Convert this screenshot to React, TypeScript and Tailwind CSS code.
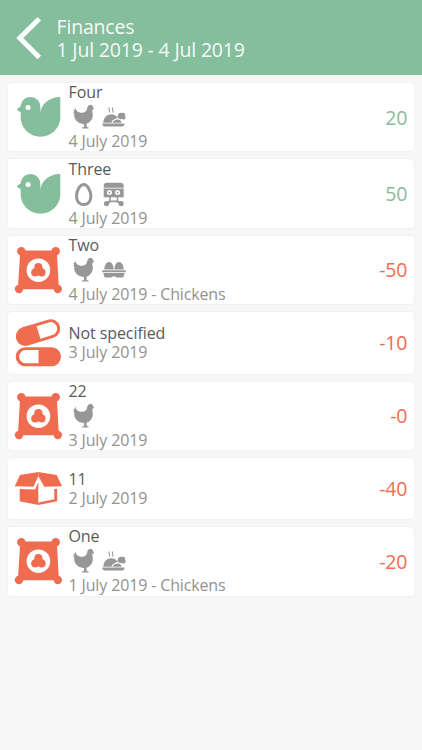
import type { ComponentType } from "react";

function BackIcon() {
  return (
    <svg width="30" height="46" viewBox="0 0 30 46" fill="none" stroke="#fff" strokeWidth="5">
      <path d="M25.3 3.8 5.8 23 25.3 42.4" />
    </svg>
  );
}

/* Category icons, 48px */

function BirdIcon() {
  return (
    <svg width="48" height="48" viewBox="0 0 48 48" fill="#85be9c">
      <path d="M2.6 16.6 6.7 13.2C7.1 8 11 3.9 16.4 3.9c5.7 0 10 4.4 10 10V20C27.2 11 35 4 46.3 3.9V24c0 11-8.8 19.7-19.8 19.7S6.7 35 6.7 24v-4.8Z" />
      <circle cx="14.1" cy="14.5" r="2.5" fill="#fff" />
    </svg>
  );
}

function FeedIcon() {
  return (
    <svg width="48" height="48" viewBox="0 0 48 48" fill="#ef6c51">
      <path d="M7.3 4.5H41.7L43.1 10 44.7 40 43.8 43.3H5L4.1 40 5.9 10Z" />
      <circle cx="7.3" cy="5.2" r="4.2" />
      <circle cx="41.7" cy="5.2" r="4.2" />
      <circle cx="5" cy="43" r="4.2" />
      <circle cx="43.8" cy="43" r="4.2" />
      <circle cx="24.4" cy="24.2" r="11.8" fill="#fff" />
      <circle cx="24.4" cy="21" r="4" />
      <circle cx="21.2" cy="26.4" r="4" />
      <circle cx="27.6" cy="26.4" r="4" />
      <path d="M20.5 21.5h7.8l2.5 4H18Z" />
    </svg>
  );
}

function PillsIcon() {
  return (
    <svg width="48" height="48" viewBox="0 0 48 48" fill="#ef6c51">
      <g transform="rotate(-17 24 13.6)">
        <rect x="1.3" y="4.1" width="45.4" height="19" rx="9.5" />
        <path d="M24.5 7h12.7a6.6 6.6 0 0 1 0 13.2H24.5Z" fill="#fff" />
      </g>
      <rect x="1.7" y="28.2" width="45.3" height="19" rx="9.5" />
      <path d="M24.5 31.1H11.7a6.6 6.6 0 0 0 0 13.2h12.8Z" fill="#fff" />
    </svg>
  );
}

function BoxIcon() {
  return (
    <svg width="48" height="48" viewBox="0 0 48 48" fill="#ef6c51">
      <path d="M6 10.1 24.4 7.1V11L19.5 21.7.7 21.2Z" />
      <path d="M42.7 10.1 24.3 7.1V11L30.3 21.7 48 21.2Z" />
      <path d="M5.7 24.1 21 24.5 24.3 17V40.1L5.7 36.2Z" />
      <path d="M40.3 24.1H43.2V36.2L24.3 40.1V37.5L40.3 34.3Z" />
    </svg>
  );
}

/* Tag icons, 30px */

function ChickenIcon() {
  return (
    <svg width="30" height="30" viewBox="0 0 30 30" fill="#959896">
      <path d="M6.3 5C6.6 8.7 9 10.7 12.6 10.8c3.6 0 5.4-2 5.7-5 .2-1.4.9-2.2 1.7-2.4l.6-.8 1.1.6 1.2-.5.4 1.2 1 .5-.2 1.1 1.1 1.4-1.8.8c-.3 2 .6 3.5.4 5.9-.3 4.2-3 7.3-6.3 8.2l.2 3.3 1.9.5v.9h-6.7v-.9l2.2-.5-.2-3.1C10 21.7 6.2 18.7 5.4 14.7l-.5-1.9.9-.1-1.7-2.4 1.3-.1L4.3 7.9l1.4.2Z" />
    </svg>
  );
}

function RoastIcon() {
  return (
    <svg width="30" height="30" viewBox="0 0 30 30" fill="#959896">
      <path d="M10.5 5.5q-1.2 1.3-.3 2.5t0 2.5M13.9 5.5q-1.2 1.3-.3 2.5t0 2.5" fill="none" stroke="#959896" strokeWidth="1.1" />
      <path d="M4.3 20.7C4.6 15.5 8 12.3 12.2 12.3c2.9 0 5 1.3 6.4 3.3l-4.7 2.7c-1 .6-1.3 1.4-1.2 2.4Z" />
      <path d="M13.7 20.7c0-1.5 2.8-3.3 5-3.3s3.7 1.6 3.7 3.3Z" />
      <path d="M18.3 15.4 21.3 17.2 22.8 16.8a2.1 2.1 0 0 0 3.2-3 2.1 2.1 0 0 0-2.7-2.9c-2.2-.8-4.4.6-4.4 2.7Z" />
      <path d="M3.3 21.6h22.2c0 1.7-.8 2.9-2.2 2.9H5.5c-1.4 0-2.2-1.2-2.2-2.9Z" />
    </svg>
  );
}

function EggIcon() {
  return (
    <svg width="30" height="30" viewBox="0 0 30 30" fill="none" stroke="#959896" strokeWidth="3">
      <path d="M14.7 5.5C18.5 5.5 21.9 12 21.9 17.3S18.8 25.6 14.7 25.6 7.5 22.8 7.5 17.3 10.9 5.5 14.7 5.5Z" />
    </svg>
  );
}

function TruckIcon() {
  return (
    <svg width="30" height="30" viewBox="0 0 30 30" fill="#959896">
      <path d="M4.7 8.7V7a3.3 3.3 0 0 1 3.3-3.3h13.4A3.3 3.3 0 0 1 24.7 7v1.7Z" />
      <path d="M4.7 9.5h20v8.8h-20Z" />
      <circle cx="10.5" cy="13.5" r="2.5" fill="#fff" />
      <circle cx="18.6" cy="13.5" r="2.5" fill="#fff" />
      <circle cx="10.5" cy="13.5" r=".9" />
      <circle cx="18.6" cy="13.5" r=".9" />
      <path d="M10.2 18h1.5v3.6h6V18h1.5v3.6l2.8 1.6-1 1.7-3.3-1.6h-6l-3.3 1.6-1-1.7 2.8-1.6Z" />
      <circle cx="7.5" cy="24.6" r="2.6" />
      <circle cx="22.1" cy="24.6" r="2.6" />
    </svg>
  );
}

function EggCartonIcon() {
  return (
    <svg width="30" height="30" viewBox="0 0 30 30" fill="#959896">
      <path d="M5.3 14.5C5.3 10.5 7.3 7 10 7s4.6 3.5 4.6 7.5Z" />
      <path d="M15.4 14.5c0-4 2-7.5 4.6-7.5s4.7 3.5 4.7 7.5Z" />
      <path d="M3.1 15.3h23.7v1.9H3.1Z" />
      <path d="M4.2 18h21.5l-1.5 4.6h-6.7l-1-1.2h-3.1l-1 1.2H5.7Z" />
    </svg>
  );
}

type Entry = {
  title: string;
  date: string;
  amount: string;
  income?: boolean;
  icon: ComponentType;
  tags?: ComponentType[];
};

const entries: Entry[] = [
  { title: "Four", date: "4 July 2019", amount: "20", income: true, icon: BirdIcon, tags: [ChickenIcon, RoastIcon] },
  { title: "Three", date: "4 July 2019", amount: "50", income: true, icon: BirdIcon, tags: [EggIcon, TruckIcon] },
  { title: "Two", date: "4 July 2019 - Chickens", amount: "-50", icon: FeedIcon, tags: [ChickenIcon, EggCartonIcon] },
  { title: "Not specified", date: "3 July 2019", amount: "-10", icon: PillsIcon },
  { title: "22", date: "3 July 2019", amount: "-0", icon: FeedIcon, tags: [ChickenIcon] },
  { title: "11", date: "2 July 2019", amount: "-40", icon: BoxIcon },
  { title: "One", date: "1 July 2019 - Chickens", amount: "-20", icon: FeedIcon, tags: [ChickenIcon, RoastIcon] },
];

function EntryCard({ title, date, amount, income, icon: Icon, tags }: Entry) {
  return (
    <li
      className={`flex items-center rounded-[3px] bg-white pr-[7px] pl-1.5 shadow-[0_0_1.5px_rgba(0,0,0,0.1)] ${
        tags ? "h-[68.4px]" : "h-[61.3px]"
      }`}
    >
      <span className="w-[54.5px] shrink-0">
        <Icon />
      </span>
      <div className="flex-1 text-base leading-[19px]">
        <p className="tracking-[-0.08px] text-[#5a5a5a]">{title}</p>
        {tags && (
          <div className="flex h-[30px]">
            {tags.map((Tag, i) => (
              <Tag key={i} />
            ))}
          </div>
        )}
        <p className="tracking-[-0.14px] text-[#929292]">{date}</p>
      </div>
      <span className={`text-[19.5px] tracking-[-0.3px] ${income ? "text-[#85be9c]" : "text-[#ef6c51]"}`}>
        {amount}
      </span>
    </li>
  );
}

export default function App() {
  return (
    <div className="min-h-screen bg-[#f7f7f7] font-['Open_Sans','Noto_Sans',sans-serif]">
      <header className="flex h-[75px] items-center bg-[#85be9c] pl-3.5 text-white/95">
        <BackIcon />
        <div className="ml-[12.5px] pt-px text-[19.5px] leading-[23.3px] tracking-[-0.18px]">
          <h1>Finances</h1>
          <p>1 Jul 2019 - 4 Jul 2019</p>
        </div>
      </header>
      <ul className="flex flex-col gap-2 px-2 pt-[8.1px]">
        {entries.map((entry) => (
          <EntryCard key={entry.title} {...entry} />
        ))}
      </ul>
    </div>
  );
}
